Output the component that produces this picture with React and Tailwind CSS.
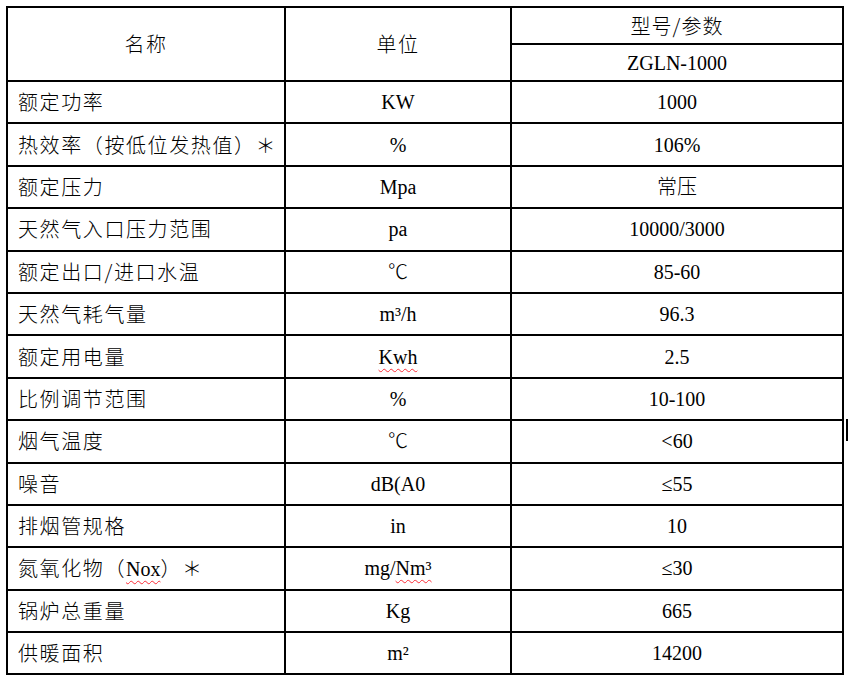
const rows = [
  ["额定功率", "KW", "1000"],
  ["热效率（按低位发热值）＊", "%", "106%"],
  ["额定压力", "Mpa", "常压"],
  ["天然气入口压力范围", "pa", "10000/3000"],
  ["额定出口/进口水温", "℃", "85-60"],
  ["天然气耗气量", "m³/h", "96.3"],
  ["额定用电量", "Kwh", "2.5"],
  ["比例调节范围", "%", "10-100"],
  ["烟气温度", "℃", "<60"],
  ["噪音", "dB(A0", "≤55"],
  ["排烟管规格", "in", "10"],
  ["氮氧化物（Nox）＊", "mg/Nm³", "≤30"],
  ["锅炉总重量", "Kg", "665"],
  ["供暖面积", "m²", "14200"],
];

const wavy = "underline decoration-wavy decoration-red-500 decoration-1 underline-offset-4";

function Unit({ value }) {
  if (value === "Kwh") return <span className={wavy}>Kwh</span>;
  if (value === "mg/Nm³")
    return (
      <span>
        mg/<span className={wavy}>Nm³</span>
      </span>
    );
  return value;
}

function Name({ value }) {
  if (value.includes("Nox"))
    return (
      <span>
        氮氧化物（<span className={`${wavy} tracking-normal`} style={{ fontFamily: "'Liberation Serif', serif" }}>Nox</span>）＊
      </span>
    );
  return value;
}

export default function App() {
  const cjk = { fontFamily: "'Noto Sans CJK SC', sans-serif" };
  const serif = { fontFamily: "'Liberation Serif', 'Noto Sans CJK SC', serif" };
  return (
    <div className="relative w-[849px] h-[675px] bg-white text-black">
      <table className="absolute left-[6px] top-[6px] w-[838px] border-collapse border-2 border-black table-fixed text-[20px] font-light" style={cjk}>
        <colgroup>
          <col className="w-[278px]" />
          <col className="w-[226px]" />
          <col />
        </colgroup>
        <tbody>
          <tr className="h-[37px]">
            <td rowSpan={2} className="border-2 border-black text-center tracking-[1.5px]">名称</td>
            <td rowSpan={2} className="border-2 border-black text-center tracking-[1.5px]">单位</td>
            <td className="border-2 border-black text-center tracking-[1px]">型号/参数</td>
          </tr>
          <tr className="h-[37px]">
            <td className="border-2 border-black text-center" style={serif}>ZGLN-1000</td>
          </tr>
          {rows.map(([n, u, v], i) => (
            <tr key={i} className="h-[42.4px]">
              <td className="border-2 border-black pl-[10px] whitespace-nowrap tracking-[1.6px]"><Name value={n} /></td>
              <td className="border-2 border-black text-center" style={serif}><Unit value={u} /></td>
              <td className="border-2 border-black text-center" style={serif}>{v}</td>
            </tr>
          ))}
        </tbody>
      </table>
      <div className="absolute left-[846px] top-[419px] w-[2px] h-[22px] bg-black" />
    </div>
  );
}
